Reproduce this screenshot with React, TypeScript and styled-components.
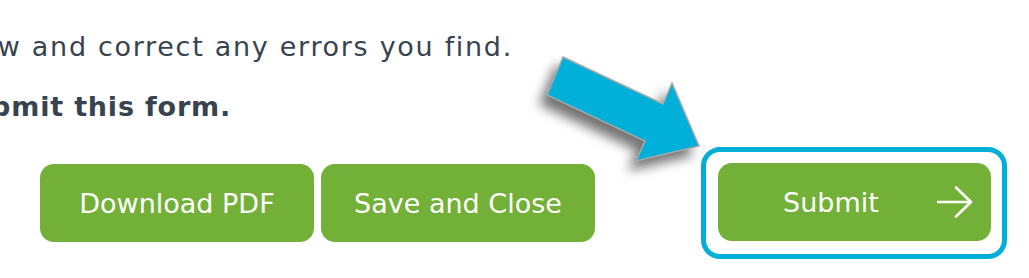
import { createGlobalStyle, styled } from 'styled-components';

const GlobalStyle = createGlobalStyle`
  html, body {
    margin: 0;
    padding: 0;
    background: #ffffff;
  }
  body {
    font-family: "DejaVu Sans", "Liberation Sans", sans-serif;
    overflow: hidden;
  }
`;

const Page = styled.div`
  position: relative;
  width: 1029px;
  height: 278px;
  overflow: hidden;
  background: #ffffff;
`;

// text lines are cut at the left edge of the shot, so they end at a fixed x
const TextLine = styled.div<{ $end: number; $bold?: boolean; $gap: number; $spacing: number }>`
  display: flex;
  justify-content: flex-end;
  width: ${(p) => p.$end}px;
  margin-top: ${(p) => p.$gap}px;
  overflow: hidden;
  white-space: nowrap;
  font-size: 27px;
  line-height: 40px;
  letter-spacing: ${(p) => p.$spacing}px;
  font-weight: ${(p) => (p.$bold ? 700 : 400)};
  color: #37444f;
`;

const Actions = styled.div`
  display: flex;
  align-items: center;
  justify-content: space-between;
  margin-top: 20px;
  padding: 0 22px 0 40px;
`;

const ButtonGroup = styled.div`
  display: flex;
  gap: 7px;
`;

const Button = styled.button<{ $width: number }>`
  display: flex;
  align-items: center;
  justify-content: center;
  width: ${(p) => p.$width}px;
  height: 78px;
  padding: 0;
  border: none;
  border-radius: 14px;
  background: #72b037;
  color: #ffffff;
  font-family: "DejaVu Sans", "Liberation Sans", sans-serif;
  font-size: 27px;
  font-weight: 400;
  cursor: pointer;
`;

const SubmitButton = styled(Button)`
  justify-content: space-between;
  padding: 0 18px 0 65px;
`;

const Highlight = styled.div`
  display: flex;
  padding: 11px 11px 13px 12px;
  border: 5px solid #00afd7;
  border-radius: 19px;
`;

const Pointer = styled.svg`
  position: absolute;
  left: 530px;
  top: 40px;
  width: 190px;
  height: 140px;
  overflow: visible;
  filter: drop-shadow(-7px 9px 6px rgba(0, 0, 0, 0.55));
`;

function ArrowRightIcon() {
  return (
    <svg width="36" height="32" viewBox="0 0 36 32" fill="none">
      <path d="M1 16H34M19 1.5L34 16L19 30.5" stroke="#ffffff" strokeWidth="2.6" strokeLinecap="round" strokeLinejoin="round" />
    </svg>
  );
}

export default function App() {
  return (
    <>
      <GlobalStyle />
      <Page>
        <TextLine $end={513} $gap={27} $spacing={1.7}>
          <span>Please review and correct any errors you find.</span>
        </TextLine>
        <TextLine $end={231} $gap={20} $spacing={0.8} $bold>
          <span>Click Submit to submit this form.</span>
        </TextLine>
        <Actions>
          <ButtonGroup>
            <Button $width={274}>Download PDF</Button>
            <Button $width={274}>Save and Close</Button>
          </ButtonGroup>
          <Highlight>
            <SubmitButton $width={273}>
              <span>Submit</span>
              <ArrowRightIcon />
            </SubmitButton>
          </Highlight>
        </Actions>
        <Pointer viewBox="0 0 190 140">
          <polygon
            points="33,17 133,64 142,43 169,106 106,121 115,101 17,55"
            fill="#00b0d8"
            stroke="#a9a9a9"
            strokeWidth="1.5"
            strokeLinejoin="miter"
          />
        </Pointer>
      </Page>
    </>
  );
}
